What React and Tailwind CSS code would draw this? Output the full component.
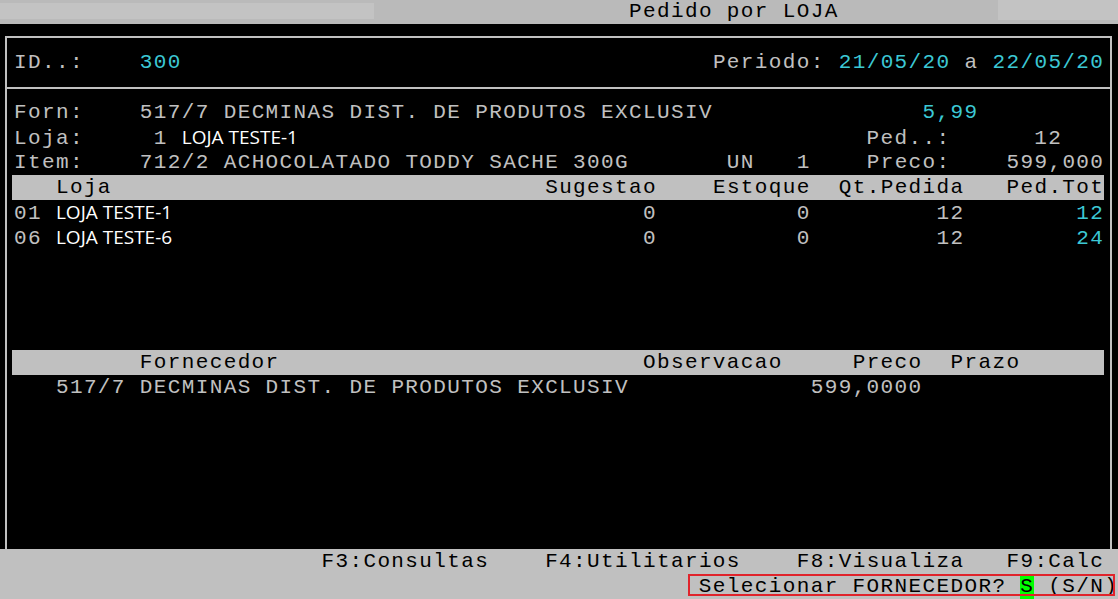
import React from 'react';

// terminal grid: 80 cols x 24 rows, one cell = 13.975 x 25 px
const GRAY = 'text-[#c0c0c0]';
const CYAN = 'text-[#3cc8d4]';
const SANS = "inline-block w-[167.7px] font-['Open_Sans',sans-serif] text-[19px] font-medium tracking-normal text-white";

const spaces = (n) => ' '.repeat(Math.max(0, n));

function Line({ start = 0, segs = [], className = '' }) {
    let cur = start;
    const out = [];
    segs.forEach(([col, text, cls = '', width], i) => {
        if (col > cur) out.push(<span key={'s' + i}>{spaces(col - cur)}</span>);
        out.push(<span key={i} className={cls}>{text}</span>);
        cur = col + (width || text.length);
    });
    return <div className={`h-[25px] leading-[25px] whitespace-pre ${className}`}>{out}</div>;
}

function HeaderBar({ segs }) {
    return (
        <div className="ml-[5px] w-[1092px] bg-[#c0c0c0] pl-[2px] text-black">
            <Line start={1} segs={segs} />
        </div>
    );
}

export default function App() {
    const lojas = [
        { cod: '01', nome: 'LOJA TESTE-1', sug: '0', est: '0', qt: '12', tot: '12' },
        { cod: '06', nome: 'LOJA TESTE-6', sug: '0', est: '0', qt: '12', tot: '24' },
    ];

    return (
        <div className="w-[1118px] h-[599px] overflow-hidden bg-black flex flex-col font-['Liberation_Mono','Courier_New',monospace] text-[21px] tracking-[1.375px]">
            {/* Title bar */}
            <div className="h-[24px] bg-[#bababa] flex items-start shrink-0">
                <div className="w-[374px] h-[16px] mt-[3px] bg-[#c3c3c3]" />
                <div className="ml-[255px] h-[24px] leading-[24px] whitespace-pre text-black">Pedido por LOJA</div>
                <div className="flex-1" />
                <div className="w-[120px] h-[20px] bg-[#c3c3c3]" />
            </div>

            {/* Main box */}
            <div className="mt-[12px] ml-[5px] w-[1107px] flex-1 border-t-2 border-l-2 border-r-2 border-[#c0c0c0] flex flex-col">
                <div className="pt-[12px] pl-[7px]">
                    <Line
                        start={1}
                        segs={[
                            [1, 'ID..:', GRAY],
                            [10, '300', CYAN],
                            [51, 'Periodo:', GRAY],
                            [60, '21/05/20', CYAN],
                            [69, 'a', GRAY],
                            [71, '22/05/20', CYAN],
                        ]}
                    />
                </div>
                <div className="mt-[12px] mb-[11px] h-[2px] bg-[#c0c0c0]" />
                <div className="pl-[7px]">
                    <Line
                        start={1}
                        segs={[
                            [1, 'Forn:', GRAY],
                            [10, '517/7 DECMINAS DIST. DE PRODUTOS EXCLUSIV', GRAY],
                            [66, '5,99', CYAN],
                        ]}
                    />
                    <Line
                        start={1}
                        segs={[
                            [1, 'Loja:', GRAY],
                            [11, '1', GRAY],
                            [13, 'LOJA TESTE-1', SANS, 12],
                            [62, 'Ped..:', GRAY],
                            [74, '12', GRAY],
                        ]}
                    />
                    <Line
                        start={1}
                        segs={[
                            [1, 'Item:', GRAY],
                            [10, '712/2 ACHOCOLATADO TODDY SACHE 300G', GRAY],
                            [52, 'UN', GRAY],
                            [57, '1', GRAY],
                            [62, 'Preco:', GRAY],
                            [72, '599,000', GRAY],
                        ]}
                    />
                </div>
                <HeaderBar
                    segs={[
                        [4, 'Loja'],
                        [39, 'Sugestao'],
                        [51, 'Estoque'],
                        [60, 'Qt.Pedida'],
                        [72, 'Ped.Tot'],
                    ]}
                />
                <div className="pl-[7px] h-[150px]">
                    {lojas.map((l) => (
                        <Line
                            key={l.cod}
                            start={1}
                            segs={[
                                [1, l.cod, GRAY],
                                [4, l.nome, SANS, 12],
                                [46, l.sug, GRAY],
                                [57, l.est, GRAY],
                                [67, l.qt, GRAY],
                                [77, l.tot, CYAN],
                            ]}
                        />
                    ))}
                </div>
                <HeaderBar
                    segs={[
                        [10, 'Fornecedor'],
                        [46, 'Observacao'],
                        [61, 'Preco'],
                        [68, 'Prazo'],
                    ]}
                />
                <div className="pl-[7px]">
                    <Line
                        start={1}
                        segs={[
                            [4, '517/7 DECMINAS DIST. DE PRODUTOS EXCLUSIV', GRAY],
                            [58, '599,0000', GRAY],
                        ]}
                    />
                </div>
            </div>

            {/* Function keys / prompt */}
            <div className="relative h-[50px] shrink-0 bg-[#c0c0c0] text-black">
                <Line
                    segs={[
                        [23, 'F3:Consultas'],
                        [39, 'F4:Utilitarios'],
                        [57, 'F8:Visualiza'],
                        [72, 'F9:Calc'],
                    ]}
                />
                <Line
                    segs={[
                        [50, 'Selecionar FORNECEDOR? '],
                        [73, 'S', 'inline-block h-[25px] bg-[#00ff00]'],
                        [74, ' (S/N)'],
                    ]}
                />
                <div className="absolute left-[688px] top-[25px] w-[427px] h-[22px] border-2 border-[#e0232b]" />
            </div>
        </div>
    );
}
